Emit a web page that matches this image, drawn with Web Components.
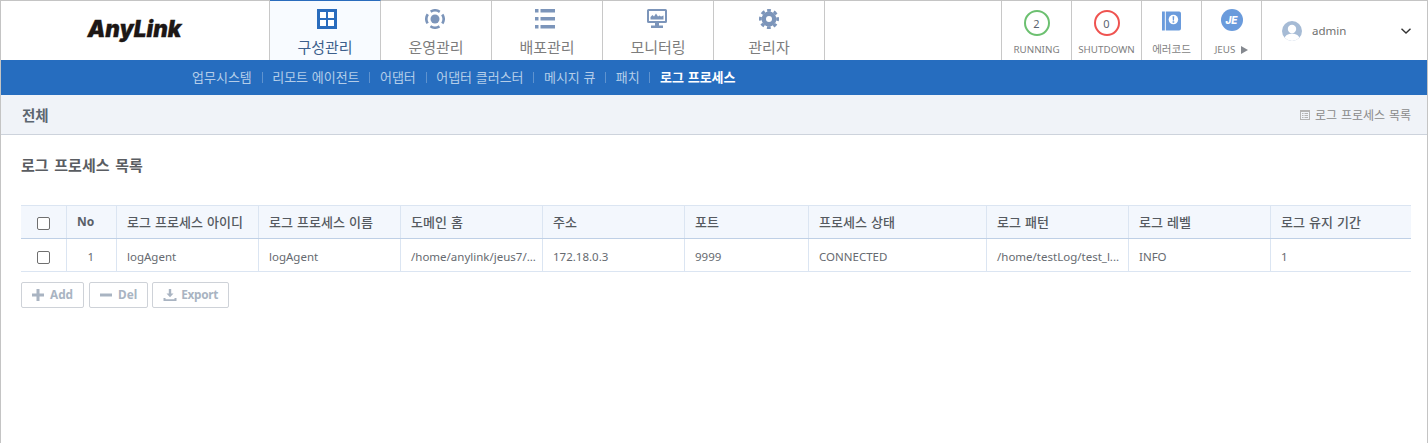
<!DOCTYPE html>
<html lang="ko">
<head>
<meta charset="utf-8">
<title>AnyLink</title>
<style>
  html, body { margin: 0; height: 100%; background: #fff; }
  body { font-family: "Noto Sans", "Noto Sans CJK KR", sans-serif; overflow: hidden; }
</style>
</head>
<body>
<anylink-app>
  <top-bar slot="top">
    <nav-tab label="구성관리" active>
      <svg style="margin-left:4px" viewBox="0 0 20 20" width="20" height="20"><path fill="#2a6cbd" d="M0 0h20v20H0z"/><path fill="#fff" d="M3 3h6v6H3zM11 3h6v6h-6zM3 11h6v6H3zM11 11h6v6h-6z"/></svg>
    </nav-tab>
    <nav-tab label="운영관리">
      <svg style="margin-right:2px" viewBox="0 0 20 20" width="20" height="20"><circle cx="10" cy="10" r="4.5" fill="#7c95ba"/><circle cx="10" cy="10" r="8.6" fill="none" stroke="#7c95ba" stroke-width="2.6" stroke-dasharray="9.5 4.01" transform="rotate(-32 10 10)"/></svg>
    </nav-tab>
    <nav-tab label="배포관리">
      <svg style="margin-right:4px" viewBox="0 0 20 20" width="20" height="20"><path fill="#7c95ba" d="M0 0h3.500v3.500H0zM5.500 0H20v3.500H5.500zM0 8h3.500v3.500H0zM5.500 8H20v3.500H5.500zM0 16h3.500v3.500H0zM5.500 16H20v3.500H5.500z"/></svg>
    </nav-tab>
    <nav-tab label="모니터링">
      <svg style="margin-right:2px" viewBox="0 0 20 20" width="20" height="20"><path fill="#7c95ba" fill-rule="evenodd" d="M1.500 0h17A1.500 1.500 0 0 1 20 1.500v11a1.500 1.500 0 0 1-1.500 1.500H12v2.500h4V19H4v-2.500h4V14H1.500A1.500 1.500 0 0 1 0 12.500v-11A1.500 1.500 0 0 1 1.500 0zM2 2v10h16V2z"/><path fill="#7c95ba" d="M3.500 10.500 V8l2-2 1.500 1.500L9 4.500l2 3 1.500-1 1.500 1 2.500-1v4z"/></svg>
    </nav-tab>
    <nav-tab label="관리자">
      <svg viewBox="0 0 20 20" width="20" height="20"><circle cx="10" cy="10" r="7.400" fill="#7c95ba"/><circle cx="10" cy="10" r="8.600" fill="none" stroke="#7c95ba" stroke-width="2.800" stroke-dasharray="3.700 3.054" transform="rotate(-102.300 10 10)"/><circle cx="10" cy="10" r="3" fill="#fff"/></svg>
    </nav-tab>
    <status-cell slot="right" label="RUNNING">
      <count-ring color="#6cc070">2</count-ring>
    </status-cell>
    <status-cell slot="right" label="SHUTDOWN">
      <count-ring color="#ef5350">0</count-ring>
    </status-cell>
    <status-cell slot="right" label="에러코드" width="60" korean>
      <svg style="margin-top:2px" viewBox="0 0 20 20" width="19" height="20"><path fill="#6a9bdc" d="M0 0h3v20H0zM4 0h14a2 2 0 0 1 2 2v16a2 2 0 0 1-2 2H4z"/><circle cx="12" cy="8.500" r="5" fill="#fff"/><path fill="#6a9bdc" d="M11.100 5h1.800l-.3 4.500h-1.200zM11.100 10.300h1.800v1.500h-1.800z"/></svg>
    </status-cell>
    <status-cell slot="right" label="JEUS" width="60" arrow>
      <span style="display:flex;width:22px;height:22px;border-radius:50%;background:#6a9bdc;color:#fff;font:italic 800 10px/22px Inter,sans-serif;justify-content:center">JE</span>
    </status-cell>
    <user-menu slot="right">admin</user-menu>
  </top-bar>
  <sub-nav slot="top">
    <sub-link>업무시스템</sub-link>
    <sub-link>리모트 에이전트</sub-link>
    <sub-link>어댑터</sub-link>
    <sub-link>어댑터 클러스터</sub-link>
    <sub-link>메시지 큐</sub-link>
    <sub-link>패치</sub-link>
    <sub-link current>로그 프로세스</sub-link>
  </sub-nav>
  <crumb-bar slot="top" title="전체">로그 프로세스 목록</crumb-bar>
  <list-panel heading="로그 프로세스 목록">
    <data-table></data-table>
    <action-row>
      <action-button label="Add">
        <svg viewBox="0 0 12 12" width="12" height="12"><path fill="#a9b4c2" d="M4.500 0h3v4.500H12v3H7.500V12h-3V7.500H0v-3h4.500z"/></svg>
      </action-button>
      <action-button label="Del">
        <svg viewBox="0 0 12 12" width="12" height="12"><path fill="#a9b4c2" d="M0 4.500h12v3H0z"/></svg>
      </action-button>
      <action-button label="Export" gap="4" style="letter-spacing:-.3px;margin-left:-1px">
        <svg viewBox="0 0 13 12" width="14" height="12"><path fill="#a9b4c2" d="M5.300 0h2.400v4.500h2.300L6.500 8.200 3 4.500h2.300zM0 9h2v1.200h9V9h2v3H0z"/></svg>
      </action-button>
    </action-row>
  </list-panel>
</anylink-app>

<script>
const KR = `"Noto Sans CJK KR", "Noto Sans", sans-serif`;

class AnylinkApp extends HTMLElement {
  constructor() {
    super();
    this.attachShadow({ mode: 'open' });
    this.shadowRoot.innerHTML = /* html */ `
      <style>
        :host { display: flex; flex-direction: column; box-sizing: border-box; height: 443px;
          border: solid #c4c4c4; border-width: 1px 1px 0 1px; background: #fff; }
      </style>
      <slot name="top"></slot>
      <slot></slot>
    `;
  }
}

class TopBar extends HTMLElement {
  constructor() {
    super();
    this.attachShadow({ mode: 'open' });
    this.shadowRoot.innerHTML = /* html */ `
      <style>
        :host { display: flex; height: 59px; background: #fff; }
        .logo { width: 268px; display: flex; align-items: center; justify-content: center;
          box-sizing: border-box; padding: 0 1px 2px 0;
          font: italic 900 22.5px/1 Inter, "Liberation Sans", sans-serif; color: #1d1715;
          -webkit-text-stroke: .3px #1d1715; }
        .tabs { display: flex; border-left: 1px solid #c8c8c8; }
        .gap { flex: 1; }
        .right { display: flex; }
      </style>
      <div class="logo">AnyLink</div>
      <div class="tabs"><slot></slot></div>
      <div class="gap"></div>
      <div class="right"><slot name="right"></slot></div>
    `;
  }
}

class NavTab extends HTMLElement {
  constructor() {
    super();
    this.attachShadow({ mode: 'open' });
    this.shadowRoot.innerHTML = /* html */ `
      <style>
        :host { display: flex; flex-direction: column; align-items: center; box-sizing: border-box;
          width: 111px; height: 59px; border-right: 1px solid #c8c8c8; padding-top: 8px;
          color: #7d7d7d; background: #fff; }
        :host([active]) { background: #f8fbff; color: #3c5f8c; border-top: 1px solid #2a6cbd;
          margin-top: -1px; height: 60px; }
        .ic { height: 20px; display: flex; }
        .lb { font: 400 15px/20px ${KR}; margin-top: 8px; }
      </style>
      <div class="ic"><slot></slot></div>
      <div class="lb">${this.getAttribute('label')}</div>
    `;
  }
}

class StatusCell extends HTMLElement {
  constructor() {
    super();
    this.attachShadow({ mode: 'open' });
    const width = this.getAttribute('width') || 70;
    const korean = this.hasAttribute('korean');
    const arrow = this.hasAttribute('arrow')
      ? `<svg viewBox="0 0 8 9" width="7" height="8" style="margin-left:6px"><path fill="#85898f" d="M0 0l8 4.500L0 9z"/></svg>` : '';
    this.shadowRoot.innerHTML = /* html */ `
      <style>
        :host { display: flex; flex-direction: column; align-items: center; box-sizing: border-box;
          width: ${width}px; height: 59px; border-left: 1px solid #c8c8c8; padding-top: 8px; color: #7f7f7f; }
        .ic { height: 26px; display: flex; align-items: flex-start; }
        .lb { display: flex; align-items: center; margin-top: ${korean ? 7 : 8}px; white-space: nowrap;
          font: 400 ${korean ? '10.5px' : '9.8px'}/14px ${korean ? KR : '"Noto Sans", sans-serif'}; }
      </style>
      <div class="ic"><slot></slot></div>
      <div class="lb">${this.getAttribute('label')}${arrow}</div>
    `;
  }
}

class CountRing extends HTMLElement {
  constructor() {
    super();
    this.attachShadow({ mode: 'open' });
    this.shadowRoot.innerHTML = /* html */ `
      <style>
        :host { display: flex; align-items: center; justify-content: center; box-sizing: border-box;
          width: 26px; height: 26px; border-radius: 50%; border: 2px solid ${this.getAttribute('color')};
          font: 400 11px/1 "Noto Sans", sans-serif; color: #5b6470; margin-top: 1px; }
      </style>
      <slot></slot>
    `;
  }
}

class UserMenu extends HTMLElement {
  constructor() {
    super();
    this.attachShadow({ mode: 'open' });
    this.shadowRoot.innerHTML = /* html */ `
      <style>
        :host { display: flex; align-items: center; box-sizing: border-box; width: 166px; height: 59px;
          border-left: 1px solid #c8c8c8; padding: 0 16px 0 20px; color: #6f6f6f;
          font: 400 11.5px/1 "Noto Sans", sans-serif; }
        .txt { margin-left: 10px; flex: 1; }
        svg { display: block; }
      </style>
      <svg viewBox="0 0 20 20" width="20" height="20">
        <clipPath id="c"><circle cx="10" cy="10" r="10"/></clipPath>
        <circle cx="10" cy="10" r="10" fill="#a6bbd5"/>
        <g clip-path="url(#c)" fill="#fff"><circle cx="10" cy="8" r="4.200"/><ellipse cx="10" cy="18" rx="7.500" ry="5.500"/></g>
      </svg>
      <span class="txt"><slot></slot></span>
      <svg viewBox="0 0 10 6" width="10" height="6"><path fill="none" stroke="#333" stroke-width="1.400" d="M.5.700 5 5 9.500.7"/></svg>
    `;
  }
}

class SubNav extends HTMLElement {
  constructor() {
    super();
    this.attachShadow({ mode: 'open' });
    this.shadowRoot.innerHTML = /* html */ `
      <style>
        :host { display: flex; align-items: center; box-sizing: border-box; height: 35px; background: #266dbf;
          padding: 0 0 1px 191px; }
      </style>
      <slot></slot>
    `;
  }
}

class SubLink extends HTMLElement {
  constructor() {
    super();
    this.attachShadow({ mode: 'open' });
    this.shadowRoot.innerHTML = /* html */ `
      <style>
        :host { display: flex; align-items: center; font: 400 13px/16px ${KR}; color: #b4cde9; white-space: nowrap; }
        :host([current]) { color: #fff; font-weight: 700; }
        :host(:not(:last-child))::after { content: ""; width: 1px; height: 11px; background: #5f93cf; margin: 0 9.7px; }
      </style>
      <slot></slot>
    `;
  }
}

class CrumbBar extends HTMLElement {
  constructor() {
    super();
    this.attachShadow({ mode: 'open' });
    this.shadowRoot.innerHTML = /* html */ `
      <style>
        :host { display: flex; align-items: center; justify-content: space-between; box-sizing: border-box;
          height: 40px; background: #f0f3f8; border-bottom: 1px solid #cdd3dc; padding: 0 16px 0 21px; }
        h2 { margin: 0; padding-top: 1px; font: 700 14.5px/20px ${KR}; color: #5c6670; }
        .path { display: flex; align-items: center; gap: 5px; font: 400 12px/16px ${KR}; word-spacing: .5px; color: #8a8a8a; }
      </style>
      <h2>${this.getAttribute('title')}</h2>
      <div class="path">
        <svg viewBox="0 0 10 10" width="10" height="10"><path fill="#b4b4b4" fill-rule="evenodd" d="M0 0h10v10H0zM1 2v7h8V2z"/><path fill="#b4b4b4" d="M2 3h1.500v1H2zM4.500 3H8v1H4.500zM2 5h1.500v1H2zM4.500 5H8v1H4.500zM2 7h1.500v1H2zM4.500 7H8v1H4.500z"/></svg>
        <slot></slot>
      </div>
    `;
  }
}

class ListPanel extends HTMLElement {
  constructor() {
    super();
    this.attachShadow({ mode: 'open' });
    this.shadowRoot.innerHTML = /* html */ `
      <style>
        :host { display: block; padding: 20px 16px 0 20px; }
        h3 { margin: 0 0 30px; font: 700 15px/20px ${KR}; word-spacing: 1.5px; color: #5a5d62; }
      </style>
      <h3>${this.getAttribute('heading')}</h3>
      <slot></slot>
    `;
  }
}

class DataTable extends HTMLElement {
  constructor() {
    super();
    this.attachShadow({ mode: 'open' });
    const cols = [
      ['로그 프로세스 아이디', 'logAgent', 142],
      ['로그 프로세스 이름', 'logAgent', 142],
      ['도메인 홈', '/home/anylink/jeus7/...', 142],
      ['주소', '172.18.0.3', 142],
      ['포트', '9999', 124],
      ['프로세스 상태', 'CONNECTED', 178],
      ['로그 패턴', '/home/testLog/test_l...', 142],
      ['로그 레벨', 'INFO', 142],
      ['로그 유지 기간', '1', 140],
    ];
    const tracks = `46px 50px ${cols.map(c => c[2] + 'px').join(' ')}`;
    this.shadowRoot.innerHTML = /* html */ `
      <style>
        :host { display: block; width: 1390px; }
        .row { display: grid; grid-template-columns: ${tracks}; }
        .head { height: 34px; background: #f3f7fd; border-top: 1px solid #dbe5f2; border-bottom: 1px solid #bfd0e6; box-sizing: border-box; }
        .body { height: 33px; border-bottom: 1px solid #dbe5f2; box-sizing: border-box; }
        .cell { display: flex; align-items: center; box-sizing: border-box; padding: 0 10px;
          border-right: 1px solid #dbe5f2; white-space: nowrap; overflow: hidden; min-width: 0; }
        .cell:last-child { border-right: 0; }
        .head .cell { font: 500 13px/16px ${KR}; color: #555a60; word-spacing: .5px; }
        .head .cell.no { font: 700 12px/16px "Noto Sans", sans-serif; color: #5a6068; }
        .body .cell { font: 400 11.5px/16px "Noto Sans", sans-serif; color: #666a70; padding-top: 3px; }
        .body .cell.no { justify-content: flex-end; padding: 3px 22px 0 0; }
        .head .cell.check { justify-content: center; padding: 2px 1px 0 0; }
        .body .cell.check { justify-content: center; padding: 4px 1px 0 0; }
        input { appearance: none; width: 13px; height: 13px; margin: 0; box-sizing: border-box;
          border: 1px solid #6f6f6f; border-radius: 2px; background: #fff; }
      </style>
      <div class="row head">
        <div class="cell check"><input type="checkbox"></div>
        <div class="cell no">No</div>
        ${cols.map(c => `<div class="cell">${c[0]}</div>`).join('')}
      </div>
      <div class="row body">
        <div class="cell check"><input type="checkbox"></div>
        <div class="cell no">1</div>
        ${cols.map(c => `<div class="cell">${c[1]}</div>`).join('')}
      </div>
    `;
  }
}

class ActionRow extends HTMLElement {
  constructor() {
    super();
    this.attachShadow({ mode: 'open' });
    this.shadowRoot.innerHTML = /* html */ `
      <style>
        :host { display: flex; gap: 5px; margin-top: 10px; }
      </style>
      <slot></slot>
    `;
  }
}

class ActionButton extends HTMLElement {
  constructor() {
    super();
    this.attachShadow({ mode: 'open' });
    const gap = this.getAttribute('gap') || 6;
    this.shadowRoot.innerHTML = /* html */ `
      <style>
        :host { display: flex; align-items: center; gap: ${gap}px; box-sizing: border-box; height: 26px;
          padding: 0 10px; border: 1px solid #ced2d8; border-radius: 2px; background: #fff;
          font: 700 11.8px/1 "Noto Sans", sans-serif; color: #a9b4c2; }
        ::slotted(svg) { display: block; }
      </style>
      <slot></slot>
      <span>${this.getAttribute('label')}</span>
    `;
  }
}

customElements.define('anylink-app', AnylinkApp);
customElements.define('top-bar', TopBar);
customElements.define('nav-tab', NavTab);
customElements.define('status-cell', StatusCell);
customElements.define('count-ring', CountRing);
customElements.define('user-menu', UserMenu);
customElements.define('sub-nav', SubNav);
customElements.define('sub-link', SubLink);
customElements.define('crumb-bar', CrumbBar);
customElements.define('list-panel', ListPanel);
customElements.define('data-table', DataTable);
customElements.define('action-row', ActionRow);
customElements.define('action-button', ActionButton);
</script>
</body>
</html>
